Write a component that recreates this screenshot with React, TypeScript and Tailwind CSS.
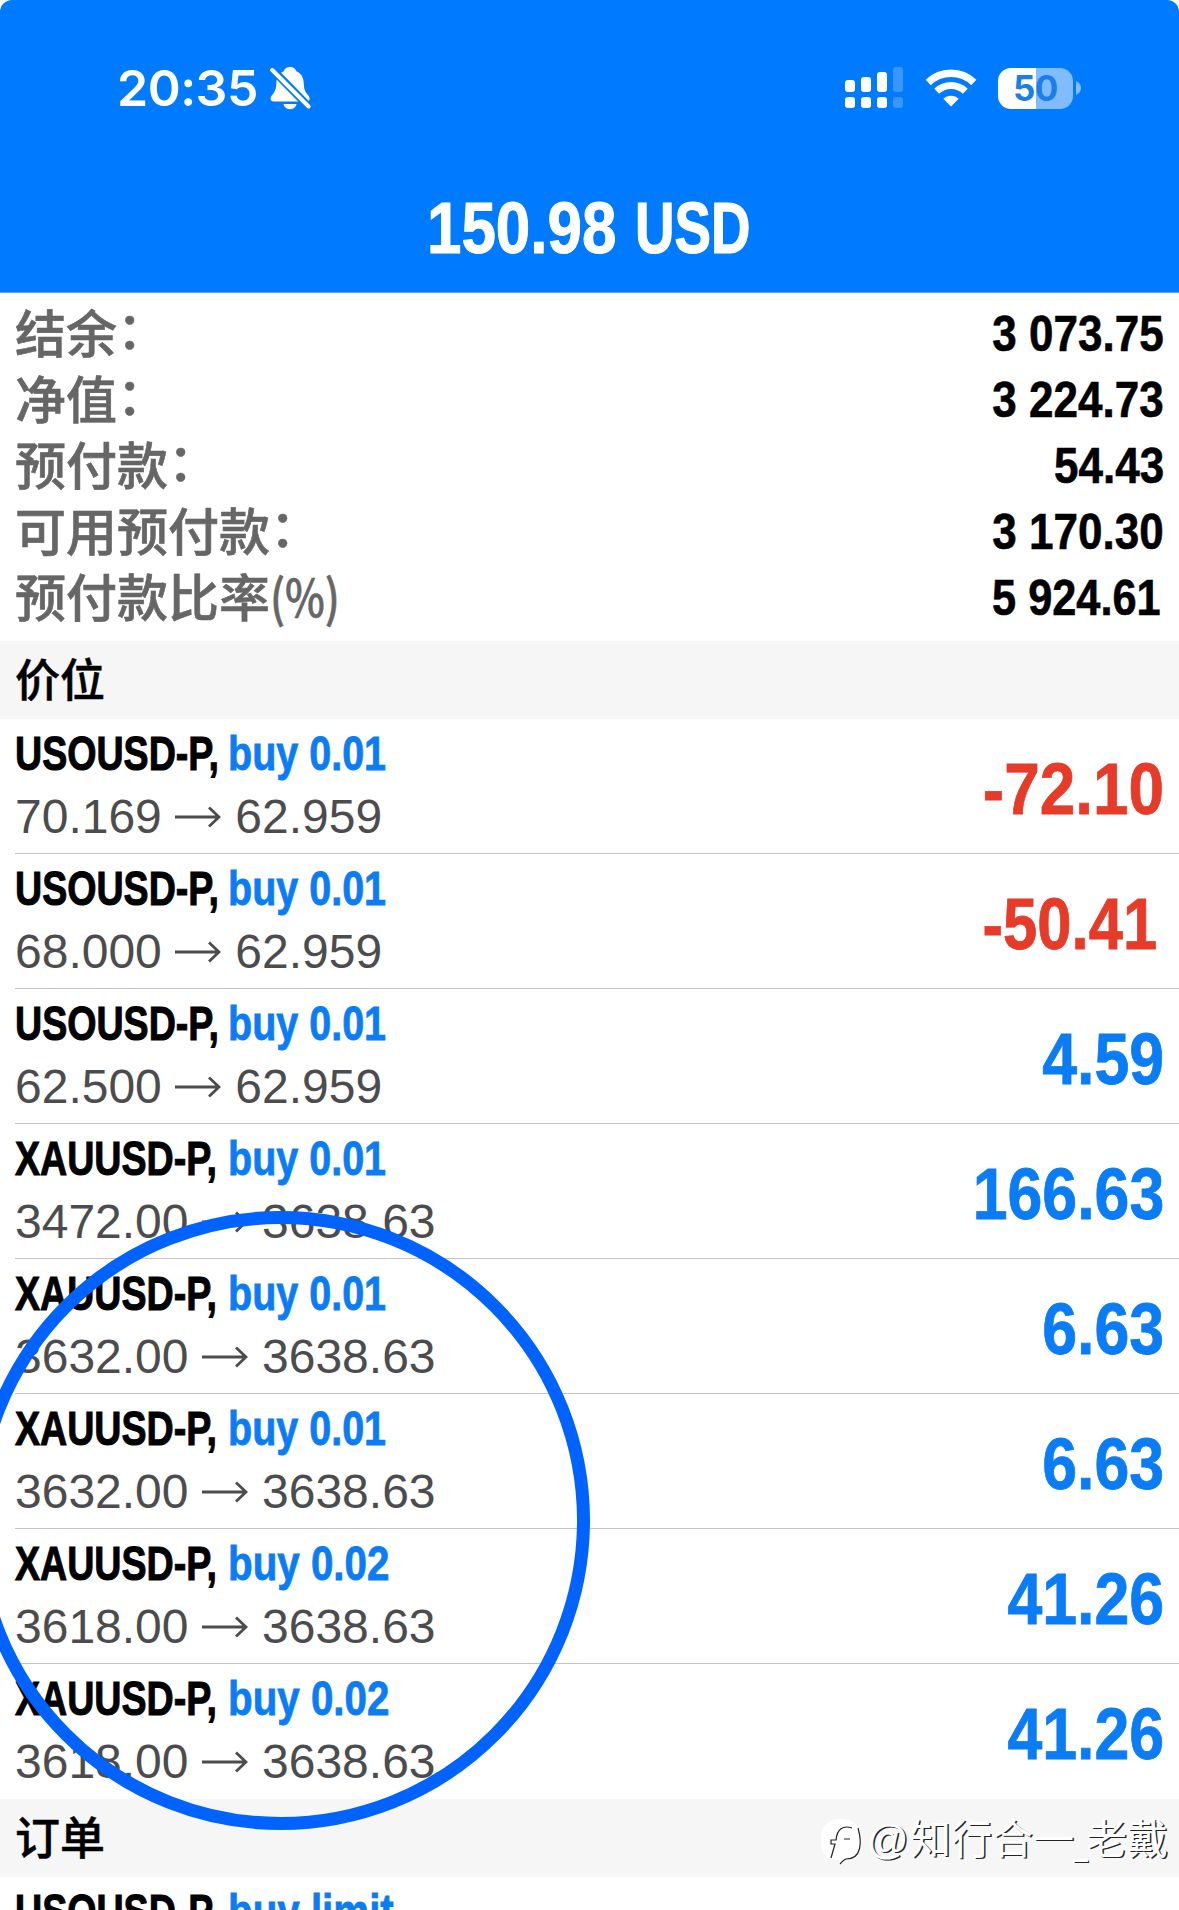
import React from 'react';

interface Position {
  symbol: string;
  side: string;
  open: string;
  current: string;
  profit: string;
}

const summary = [
  { label: '结余', suffix: '：', value: '3 073.75' },
  { label: '净值', suffix: '：', value: '3 224.73' },
  { label: '预付款', suffix: '：', value: '54.43' },
  { label: '可用预付款', suffix: '：', value: '3 170.30' },
  { label: '预付款比率', suffix: '(%)', value: '5 924.61' },
];

const positions: Position[] = [
  { symbol: 'USOUSD-P,', side: 'buy 0.01', open: '70.169', current: '62.959', profit: '-72.10' },
  { symbol: 'USOUSD-P,', side: 'buy 0.01', open: '68.000', current: '62.959', profit: '-50.41' },
  { symbol: 'USOUSD-P,', side: 'buy 0.01', open: '62.500', current: '62.959', profit: '4.59' },
  { symbol: 'XAUUSD-P,', side: 'buy 0.01', open: '3472.00', current: '3638.63', profit: '166.63' },
  { symbol: 'XAUUSD-P,', side: 'buy 0.01', open: '3632.00', current: '3638.63', profit: '6.63' },
  { symbol: 'XAUUSD-P,', side: 'buy 0.01', open: '3632.00', current: '3638.63', profit: '6.63' },
  { symbol: 'XAUUSD-P,', side: 'buy 0.02', open: '3618.00', current: '3638.63', profit: '41.26' },
  { symbol: 'XAUUSD-P,', side: 'buy 0.02', open: '3618.00', current: '3638.63', profit: '41.26' },
];

const BellOff = () => (
  <svg width="42" height="46" viewBox="0 0 42 46" fill="none">
    <path
      d="M21 2c3.600 0 5.800 2.200 6.300 4.200 4.600 1.800 7.200 6 7.400 11.500.2 6.500 1.600 9.300 4 12 1.400 1.600 1.900 2.700 1.900 4 0 1.800-1.200 2.800-3 2.800H4.600c-1.900 0-3-1-3-2.800 0-1.500.6-2.600 2-4.200 2.300-2.600 3.600-5.400 3.800-11.800.2-5.500 2.800-9.700 7.400-11.500C15.300 4.200 17.500 2 21 2Z"
      fill="#fff"
    />
    <path d="M14.500 39h13c-.6 3.200-3.200 5.200-6.500 5.200s-5.900-2-6.500-5.200Z" fill="#fff" />
    <path d="M-1 0 44 46" stroke="#007aff" strokeWidth="8" />
    <path d="M3.200 5 39.600 41.500" stroke="#fff" strokeWidth="4" strokeLinecap="round" />
  </svg>
);

const Signal = () => (
  <svg width="58" height="42" viewBox="0 0 58 42" fill="#fff">
    <rect x="0" y="13" width="10" height="12" rx="3" />
    <rect x="16" y="10" width="10" height="15" rx="3" />
    <rect x="32" y="5" width="10" height="20" rx="3" />
    <rect x="48" y="0" width="10" height="25" rx="3" opacity="0.22" />
    <rect x="0" y="30" width="10" height="11" rx="3" />
    <rect x="16" y="30" width="10" height="11" rx="3" />
    <rect x="32" y="30" width="10" height="11" rx="3" />
    <rect x="48" y="30" width="10" height="11" rx="3" opacity="0.22" />
  </svg>
);

const Wifi = () => (
  <svg width="52" height="38" viewBox="0 0 52 38" fill="none" stroke="#fff">
    <path d="M3.200 13.500a33 33 0 0 1 45.600 0" strokeWidth="7.500" />
    <path d="M11.700 22.200a21 21 0 0 1 28.600 0" strokeWidth="7" />
    <path d="M26 37.500 18.300 29.800a11 11 0 0 1 15.400 0Z" fill="#fff" stroke="none" />
  </svg>
);

const Battery = () => (
  <div className="flex items-center gap-[3px]">
    <div className="flex h-[41px] w-[75px] items-center justify-center rounded-[13px] bg-[linear-gradient(to_right,#fff_38px,#80bcff_38px)] font-['Inter'] text-[35px] font-bold leading-[41px] tracking-[-0.500px] text-[#1a7fe8]">
      50
    </div>
    <svg width="5" height="14" viewBox="0 0 5 14" fill="#80bcff">
      <path d="M0 0c3 1.200 5 4 5 7s-2 5.800-5 7Z" />
    </svg>
  </div>
);

const Arrow = () => (
  <svg className="ml-[13.500px] mr-[14px] shrink-0" width="46" height="22" viewBox="0 0 46 22" fill="none" stroke="#4c4c4e" strokeWidth="2.800">
    <path d="M0 11h44M34 1.500 44 11 34 20.500" />
  </svg>
);

const SectionTitle: React.FC<{ title: string; children?: React.ReactNode }> = ({ title, children }) => (
  <div className="flex h-[78px] items-start justify-between bg-[#f6f6f6] pl-[15px]">
    <h2 className="text-[45px] font-medium leading-[81px] text-black [-webkit-text-stroke:0.500px]">{title}</h2>
    {children}
  </div>
);

const OrderName: React.FC<{ symbol: string; side: string }> = ({ symbol, side }) => (
  <div className="flex whitespace-nowrap text-[48px] font-bold leading-[66px]">
    <span className="w-[213px] origin-left scale-x-[0.783] text-black [-webkit-text-stroke:1px]">{symbol}</span>
    <span className={`origin-left text-[#0a7cf5] [-webkit-text-stroke:0.800px] ${side.endsWith('1') ? 'scale-x-[0.823]' : 'scale-x-[0.84]'}`}>
      {side}
    </span>
  </div>
);

const profitScale = (profit: string) => {
  if (profit.endsWith('1')) return 'scale-x-[0.855] mr-[7px]';
  return profit.startsWith('-') ? 'scale-x-[0.888]' : 'scale-x-[0.87]';
};

const PositionRow: React.FC<{ item: Position; last: boolean }> = ({ item, last }) => {
  const isLoss = item.profit.startsWith('-');

  return (
    <div className={`ml-[15px] flex h-[135px] justify-between border-b pr-[15px] ${last ? 'border-transparent' : 'border-[#c4c4c8]'}`}>
      <div className="pt-[2px]">
        <OrderName symbol={item.symbol} side={item.side} />
        <div className="flex items-center text-[48px] leading-[60px] text-[#4c4c4e]">
          <span>{item.open}</span>
          <Arrow />
          <span>{item.current}</span>
        </div>
      </div>
      <span className={`origin-right pt-[4px] text-[72px] font-bold leading-[132px] [-webkit-text-stroke:0.800px] ${profitScale(item.profit)} ${isLoss ? 'text-[#e63b29]' : 'text-[#0a7cf5]'}`}>
        {item.profit}
      </span>
    </div>
  );
};

const Watermark = () => (
  <div className="flex items-center pr-[11px] pt-[5px] text-[41px] font-normal leading-[72px] text-white [text-shadow:1.500px_1px_0_#222]">
    <svg className="mr-[3px] mt-[3px]" width="44" height="48" viewBox="0 0 44 48" fill="none">
      <path d="M21 1c13 0 20 7 20 20 0 15-4 19-15 20-3 1-4 3-6 5l-1-4C6 42 1 36 1 21 1 8 8 1 21 1Z" fill="#fff" />
      <path d="M38 10c4 14 4 31-12 31-3 1-4 3-6 5M32 10c-9-3-15 1-16 12h-5v4h4l-4 14M24 21h6" stroke="#222" strokeWidth="1.200" />
    </svg>
    <span className="w-[43px]">@</span>
    <span>知行合一</span>
    <span className="w-[12px] origin-left scale-x-[0.600]">_</span>
    <span>老戴</span>
  </div>
);

const App: React.FC = () => {
  return (
    <div className="relative h-[1910px] w-[1179px] overflow-hidden bg-white font-['Liberation_Sans','Noto_Sans_CJK_SC',sans-serif]">
      <header className="h-[293px] rounded-t-[12px] border-b border-[#5a9fe8] bg-[#007aff] pt-[58px] text-white">
        <div className="flex h-[60px] items-center justify-between pl-[117px] pr-[98px]">
          <div className="flex items-center gap-[11px]">
            <span className="font-['Inter'] text-[50px] font-semibold leading-[60px] tracking-[-0.500px]">20:35</span>
            <BellOff />
          </div>
          <div className="flex items-center">
            <Signal />
            <span className="ml-[22px] mr-[21px]"><Wifi /></span>
            <Battery />
          </div>
        </div>
        <h1 className="mt-[74px] flex justify-center whitespace-nowrap text-[72px] font-bold leading-[73px]">
          <span className="w-[208px] origin-left scale-x-[0.86] [-webkit-text-stroke:1px]">150.98</span>
          <span className="w-[118px] origin-left scale-x-[0.76] [-webkit-text-stroke:1.200px]">USD</span>
        </h1>
      </header>

      {/* Account summary */}
      <section className="h-[348px] pl-[15px] pr-[15px] pt-[7.500px]">
        {summary.map(s => (
          <div key={s.label} className="flex h-[66px] items-start justify-between">
            <div className="flex text-[51px] font-medium leading-[61px] text-[#666] font-['Noto_Sans_CJK_SC',sans-serif] [-webkit-text-stroke:0.600px]">
              <span>{s.label}</span>
              <span className={s.suffix === '：' ? '-translate-y-[4px]' : 'origin-left scale-x-[0.83]'}>{s.suffix}</span>
            </div>
            <span className={`origin-right text-[50px] font-bold leading-[67px] text-black [-webkit-text-stroke:0.600px] ${s.value.endsWith('1') ? 'mr-[3px] scale-x-[0.866]' : 'scale-x-[0.88]'}`}>
              {s.value}
            </span>
          </div>
        ))}
      </section>

      <SectionTitle title="价位" />
      {positions.map((p, i) => (
        <PositionRow key={i} item={p} last={i === positions.length - 1} />
      ))}

      <SectionTitle title="订单">
        <Watermark />
      </SectionTitle>
      <div className="ml-[15px] pt-[2px]">
        <OrderName symbol="USOUSD-P," side="buy limit" />
      </div>

      {/* Hand-drawn highlight around the gold positions */}
      <div className="absolute left-[-29.500px] top-[1210.500px] h-[619px] w-[619px] rounded-full border-[13px] border-[#0062ff]" />
    </div>
  );
};

export default App;
